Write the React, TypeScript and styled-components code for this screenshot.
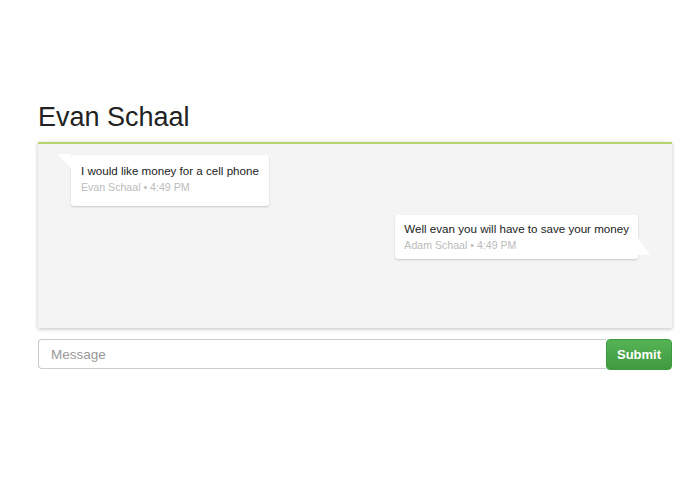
import styled, { createGlobalStyle } from "styled-components";

const GlobalStyle = createGlobalStyle`
  body {
    margin: 0;
    background: #fff;
    font-family: "Helvetica Neue", "Liberation Sans", Arial, sans-serif;
    color: #222;
  }
`;

const StyledPage = styled.div`
  width: 634px;
  margin: 0 0 0 38px;
  padding-top: 100px;
`;

const StyledTitle = styled.h1`
  margin: 0 0 8px 0;
  font-size: 27px;
  font-weight: 400;
  line-height: 34px;
  color: #222;
`;

const StyledChat = styled.div`
  box-sizing: border-box;
  height: 186px;
  background-color: #f4f4f4;
  border-top: 2px solid #b7d56c;
  box-shadow: 0 1px 4px rgba(0, 0, 0, 0.25);
  padding: 11px 34px 0 33px;
  display: flex;
  flex-direction: column;
  gap: 9px;
`;

const StyledRow = styled.div<{ $mine: boolean }>`
  display: flex;
  justify-content: ${(p) => (p.$mine ? "flex-end" : "flex-start")};
`;

const StyledBubble = styled.div<{ $mine: boolean }>`
  position: relative;
  background: #fff;
  border-radius: 3px;
  box-shadow: 0 1px 2px rgba(0, 0, 0, 0.18);
  padding: ${(p) => (p.$mine ? "6px 9px 6px 9px" : "8px 10px 11px 10px")};

  &::before {
    content: "";
    position: absolute;
    width: 0;
    height: 0;
    ${(p) =>
      p.$mine
        ? `
      right: -12px;
      bottom: 4px;
      border-right: 12px solid transparent;
      border-bottom: 17px solid #fff;
    `
        : `
      left: -14px;
      top: -1px;
      border-left: 14px solid transparent;
      border-top: 14px solid #fff;
    `}
  }
`;

const StyledText = styled.div`
  font-size: 11.6px;
  line-height: 16px;
  color: #222;
`;

const StyledMeta = styled.div`
  font-size: 10.6px;
  line-height: 16px;
  color: #bbb;
`;

const StyledForm = styled.div`
  display: flex;
  margin-top: 11px;
`;

const StyledInput = styled.input`
  flex: 1;
  height: 30px;
  box-sizing: border-box;
  border: 1px solid #ccc;
  border-right: 0;
  border-radius: 4px 0 0 4px;
  padding: 0 12px;
  font-family: inherit;
  font-size: 13.5px;
  color: #333;
  outline: none;
  &::placeholder {
    color: #999;
  }
`;

const StyledButton = styled.button`
  width: 66px;
  height: 31px;
  border: 1px solid #3e9a3e;
  border-radius: 4px;
  background-image: linear-gradient(#55b355, #409a40);
  color: #fff;
  font-family: inherit;
  font-size: 13px;
  font-weight: 700;
  cursor: pointer;
  &:hover {
    filter: brightness(0.95);
  }
`;

const messages = [
  { text: "I would like money for a cell phone", author: "Evan Schaal", time: "4:49 PM", mine: false },
  { text: "Well evan you will have to save your money", author: "Adam Schaal", time: "4:49 PM", mine: true },
];

const App: React.FC = () => {
  return (
    <>
      <GlobalStyle />
      <StyledPage>
        <StyledTitle>Evan Schaal</StyledTitle>
        <StyledChat>
          {messages.map((m, i) => (
            <StyledRow key={i} $mine={m.mine}>
              <StyledBubble $mine={m.mine}>
                <StyledText>{m.text}</StyledText>
                <StyledMeta>
                  {m.author} • {m.time}
                </StyledMeta>
              </StyledBubble>
            </StyledRow>
          ))}
        </StyledChat>
        <StyledForm>
          <StyledInput placeholder="Message" />
          <StyledButton>Submit</StyledButton>
        </StyledForm>
      </StyledPage>
    </>
  );
};

export default App;
